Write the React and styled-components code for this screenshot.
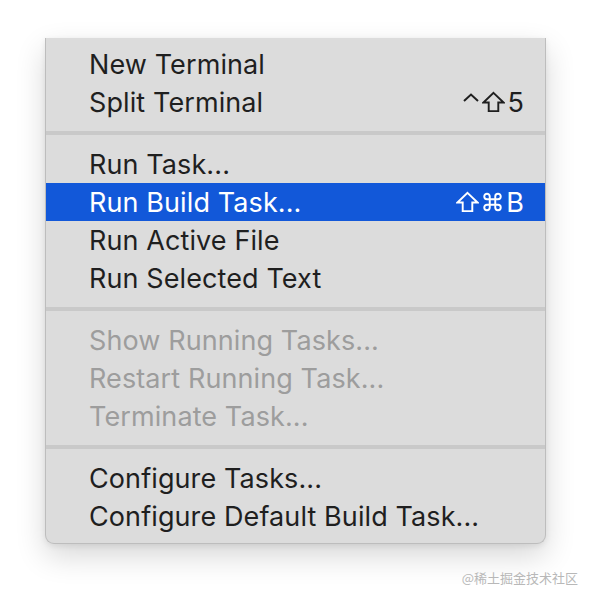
import React from "react";
import styled, { createGlobalStyle } from "styled-components";

const GlobalStyle = createGlobalStyle`
  html, body {
    margin: 0;
    padding: 0;
    background: #ffffff;
  }
  body {
    font-family: Inter, "Liberation Sans", sans-serif;
  }
`;

const Page = styled.div`
  width: 592px;
  height: 598px;
  display: flex;
  flex-direction: column;
  padding: 38px 0 0 45px;
  box-sizing: border-box;
  overflow: hidden;
`;

const Menu = styled.div`
  width: 501px;
  box-sizing: border-box;
  background: #dcdcdc;
  border: 1px solid #bdbdbd;
  border-top: none;
  border-radius: 0 0 9px 9px;
  padding: 7px 0 8px;
  box-shadow: 0 12px 30px rgba(0, 0, 0, 0.16), 0 2px 6px rgba(0, 0, 0, 0.08);
`;

const Item = styled.div`
  height: 38px;
  display: flex;
  align-items: center;
  justify-content: space-between;
  padding: 0 21px 0 43px;
  font-size: 27px;
  letter-spacing: 0.1px;
  color: ${(p) => (p.$active ? "#ffffff" : p.$disabled ? "#9d9d9d" : "#1f1f1f")};
  background: ${(p) => (p.$active ? "#1258d9" : "transparent")};
`;

const Separator = styled.div`
  height: 24px;
  display: flex;
  align-items: center;
  &::after {
    content: "";
    flex: 1;
    height: 4px;
    background: #c9c9c9;
  }
`;

const Keys = styled.span`
  display: flex;
  align-items: center;
  gap: 2px;
  font-size: 27px;
`;

const Glyph = styled.svg`
  width: ${(p) => p.$w || 23}px;
  height: 22px;
  fill: none;
  stroke: currentColor;
  stroke-width: 2;
  stroke-linejoin: miter;
`;

const Watermark = styled.div`
  align-self: flex-end;
  margin: 24px 14px 0 0;
  font-family: "Noto Sans CJK SC", sans-serif;
  font-size: 13px;
  color: #b8b8b8;
`;

const Control = () => (
  <Glyph $w={18} viewBox="0 0 18 22">
    <polyline points="2,10 9,3.5 16,10" />
  </Glyph>
);

const Shift = () => (
  <Glyph viewBox="0 0 24 22">
    <path d="M12 1.5 L22.5 11.5 H17 V20.5 H7 V11.5 H1.5 Z" />
  </Glyph>
);

const Cmd = () => (
  <Glyph viewBox="0 0 24 24" style={{ strokeWidth: 2.1 }}>
    <path d="M15 6v12a3 3 0 1 0 3-3H6a3 3 0 1 0 3 3V6a3 3 0 1 0-3 3h12a3 3 0 1 0-3-3" />
  </Glyph>
);

const App = () => (
  <>
    <GlobalStyle />
    <Page>
      <Menu>
        <Item>New Terminal</Item>
        <Item>
          Split Terminal
          <Keys>
            <Control />
            <Shift />
            5
          </Keys>
        </Item>
        <Separator />
        <Item>Run Task...</Item>
        <Item $active>
          Run Build Task...
          <Keys>
            <Shift />
            <Cmd />
            B
          </Keys>
        </Item>
        <Item>Run Active File</Item>
        <Item>Run Selected Text</Item>
        <Separator />
        <Item $disabled>Show Running Tasks...</Item>
        <Item $disabled>Restart Running Task...</Item>
        <Item $disabled>Terminate Task...</Item>
        <Separator />
        <Item>Configure Tasks...</Item>
        <Item>Configure Default Build Task...</Item>
      </Menu>
      <Watermark>@稀土掘金技术社区</Watermark>
    </Page>
  </>
);

export default App;
